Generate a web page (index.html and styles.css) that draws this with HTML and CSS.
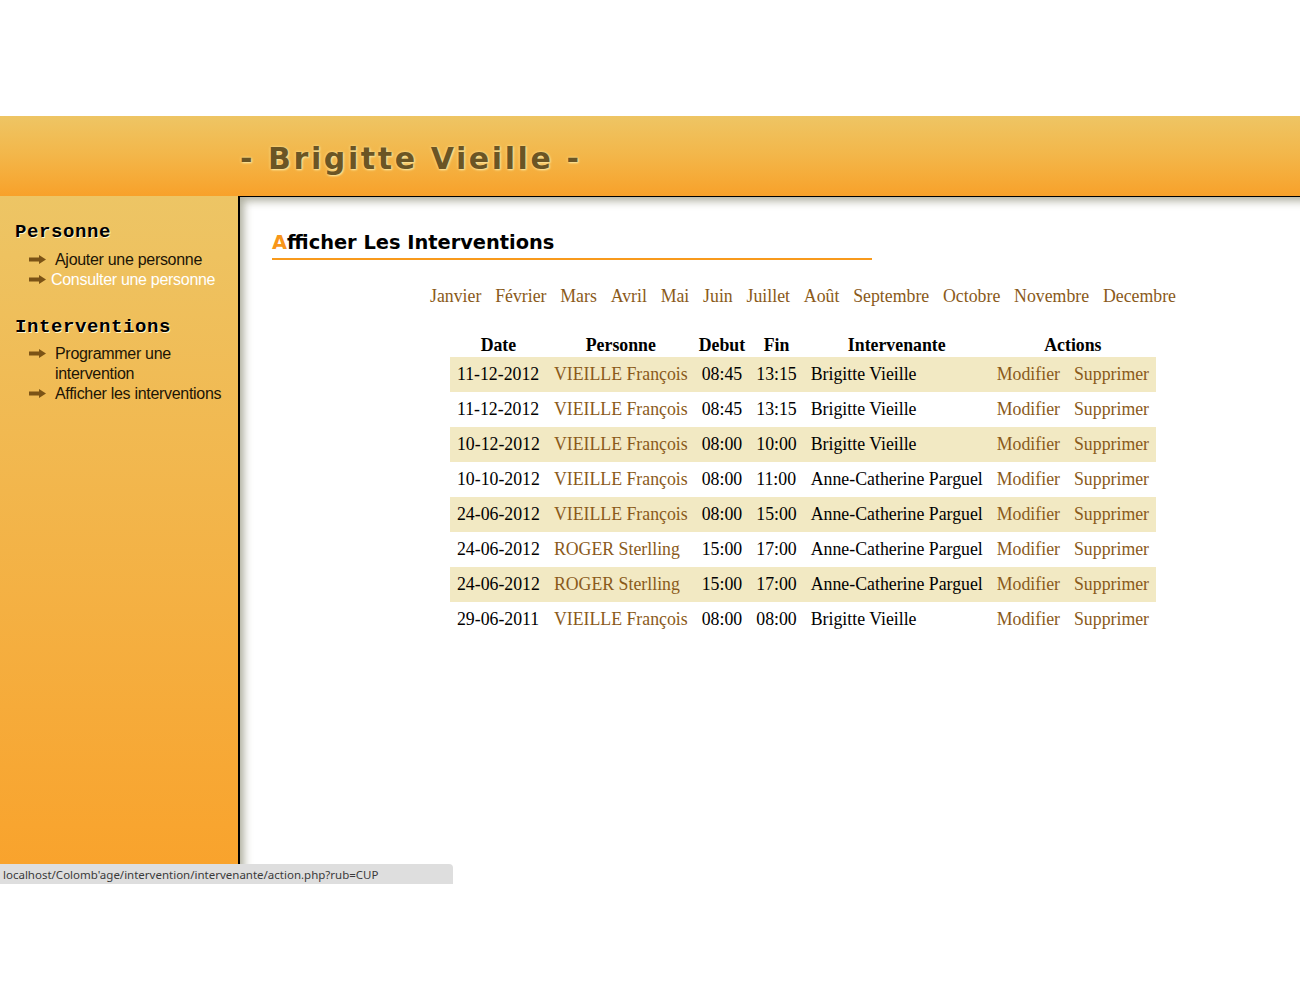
FILE: index.html
```html
<!DOCTYPE html>
<html lang="fr">
<head>
<meta charset="utf-8">
<title>Brigitte Vieille</title>
<link rel="stylesheet" href="styles.css">
</head>
<body>
<div class="page">
  <header class="banner">
    <h1 class="banner-title">- Brigitte Vieille -</h1>
  </header>
  <div class="body-wrap">
    <nav class="sidebar">
      <h2 class="side-heading">Personne</h2>
      <ul class="side-list">
        <li class="side-item"><svg class="arrow" viewBox="0 0 17 9" width="17" height="9"><path d="M0 2.5h10V0l7 4.5-7 4.5V6.5H0z" fill="#7b5316"/></svg><a class="side-link" href="#">Ajouter une personne</a></li>
        <li class="side-item side-item--tight"><svg class="arrow" viewBox="0 0 17 9" width="17" height="9"><path d="M0 2.5h10V0l7 4.5-7 4.5V6.5H0z" fill="#7b5316"/></svg><a class="side-link side-link--active" href="#">Consulter une personne</a></li>
      </ul>
      <h2 class="side-heading side-heading--second">Interventions</h2>
      <ul class="side-list side-list--second">
        <li class="side-item"><svg class="arrow" viewBox="0 0 17 9" width="17" height="9"><path d="M0 2.5h10V0l7 4.5-7 4.5V6.5H0z" fill="#7b5316"/></svg><a class="side-link" href="#">Programmer une<br>intervention</a></li>
        <li class="side-item"><svg class="arrow" viewBox="0 0 17 9" width="17" height="9"><path d="M0 2.5h10V0l7 4.5-7 4.5V6.5H0z" fill="#7b5316"/></svg><a class="side-link" href="#">Afficher les interventions</a></li>
      </ul>
    </nav>
    <main class="content">
      <h2 class="page-title"><span class="initial">A</span>fficher Les Interventions</h2>
      <div class="center-zone">
        <div class="months">
          <a href="#">Janvier</a><a href="#">Février</a><a href="#">Mars</a><a href="#">Avril</a><a href="#">Mai</a><a href="#">Juin</a><a href="#">Juillet</a><a href="#">Août</a><a href="#">Septembre</a><a href="#">Octobre</a><a href="#">Novembre</a><a href="#">Decembre</a>
        </div>
        <table class="grid">
          <thead>
            <tr><th>Date</th><th>Personne</th><th>Debut</th><th>Fin</th><th>Intervenante</th><th colspan="2">Actions</th></tr>
          </thead>
          <tbody>
            <tr class="alt"><td>11-12-2012</td><td><a href="#">VIEILLE François</a></td><td>08:45</td><td>13:15</td><td>Brigitte Vieille</td><td><a href="#">Modifier</a></td><td><a href="#">Supprimer</a></td></tr>
            <tr><td>11-12-2012</td><td><a href="#">VIEILLE François</a></td><td>08:45</td><td>13:15</td><td>Brigitte Vieille</td><td><a href="#">Modifier</a></td><td><a href="#">Supprimer</a></td></tr>
            <tr class="alt"><td>10-12-2012</td><td><a href="#">VIEILLE François</a></td><td>08:00</td><td>10:00</td><td>Brigitte Vieille</td><td><a href="#">Modifier</a></td><td><a href="#">Supprimer</a></td></tr>
            <tr><td>10-10-2012</td><td><a href="#">VIEILLE François</a></td><td>08:00</td><td>11:00</td><td>Anne-Catherine Parguel</td><td><a href="#">Modifier</a></td><td><a href="#">Supprimer</a></td></tr>
            <tr class="alt"><td>24-06-2012</td><td><a href="#">VIEILLE François</a></td><td>08:00</td><td>15:00</td><td>Anne-Catherine Parguel</td><td><a href="#">Modifier</a></td><td><a href="#">Supprimer</a></td></tr>
            <tr><td>24-06-2012</td><td><a href="#">ROGER Sterlling</a></td><td>15:00</td><td>17:00</td><td>Anne-Catherine Parguel</td><td><a href="#">Modifier</a></td><td><a href="#">Supprimer</a></td></tr>
            <tr class="alt"><td>24-06-2012</td><td><a href="#">ROGER Sterlling</a></td><td>15:00</td><td>17:00</td><td>Anne-Catherine Parguel</td><td><a href="#">Modifier</a></td><td><a href="#">Supprimer</a></td></tr>
            <tr><td>29-06-2011</td><td><a href="#">VIEILLE François</a></td><td>08:00</td><td>08:00</td><td>Brigitte Vieille</td><td><a href="#">Modifier</a></td><td><a href="#">Supprimer</a></td></tr>
          </tbody>
        </table>
      </div>
    </main>
  </div>
  <div class="statusbar">localhost/Colomb'age/intervention/intervenante/action.php?rub=CUP</div>
</div>
</body>
</html>
```
FILE: styles.css
```css
html, body {
  margin: 0;
  padding: 0;
  background: #fff;
}

.page {
  position: relative;
  padding-top: 116px;
  height: 768px;
  display: flex;
  flex-direction: column;
}

.banner {
  height: 80px;
  background: linear-gradient(to bottom, #eec564 0%, #f3b649 50%, #f8a12a 100%);
  display: flex;
  align-items: center;
  padding-left: 240px;
  flex: none;
}

.banner-title {
  margin: 0;
  font-family: "DejaVu Sans", sans-serif;
  font-weight: bold;
  font-size: 30px;
  letter-spacing: 2.6px;
  color: #6b5524;
  text-shadow: 0 0 3px #fbe59a, 1px 1px 2px #fbe59a;
  line-height: 1;
  padding-top: 6px;
}

.body-wrap {
  flex: 1;
  display: flex;
}

.sidebar {
  flex: none;
  width: 240px;
  box-sizing: border-box;
  background: linear-gradient(to bottom, #edc565 0%, #f9a22b 100%);
  border-right: 2px solid #000;
  padding-top: 25px;
}

.side-heading {
  margin: 0;
  padding-left: 15px;
  font-family: "Liberation Mono", "Courier New", monospace;
  font-weight: bold;
  font-size: 19px;
  letter-spacing: 0.6px;
  line-height: 22px;
  color: #000;
  text-shadow: 1px 1px 0 #fff6d0;
}

.side-heading--second {
  margin-top: 26px;
}

.side-list {
  list-style: none;
  margin: 7px 0 0 0;
  padding: 0 0 0 29px;
}

.side-list--second {
  margin-top: 6px;
}

.side-item {
  display: flex;
  align-items: flex-start;
  font-family: "Liberation Sans", Arial, sans-serif;
  font-size: 16px;
  line-height: 20px;
  letter-spacing: -0.3px;
}

.arrow {
  flex: none;
  margin-top: 5px;
  margin-right: 9px;
}

.side-item--tight .arrow {
  margin-right: 5px;
}

.side-link {
  color: #1c1406;
  text-decoration: none;
}

.side-link--active {
  color: #fff;
}

.content {
  flex: 1;
  border-top: 1px solid #000;
  background: #fff;
  box-shadow: inset 7px 7px 9px -3px rgba(110, 110, 80, 0.55);
  padding: 34px 0 0 32px;
}

.page-title {
  margin: 0;
  width: 600px;
  font-family: "DejaVu Sans", Verdana, sans-serif;
  font-weight: bold;
  font-size: 19.4px;
  line-height: 23px;
  color: #000;
  padding-bottom: 4px;
  border-bottom: 2px solid #f89a1c;
}

.initial {
  color: #f8961a;
}

.center-zone {
  margin-left: 34px;
  display: flex;
  flex-direction: column;
  align-items: center;
}

.months {
  margin-top: 26px;
  display: flex;
  gap: 13.8px;
  font-family: "Liberation Serif", "Times New Roman", serif;
  font-size: 17.8px;
  line-height: 21px;
}

.months a {
  color: #8a5a1a;
  text-decoration: none;
}

.grid {
  margin-top: 26px;
  border-collapse: collapse;
  border-spacing: 0;
  font-family: "Liberation Serif", "Times New Roman", serif;
  font-size: 17.8px;
  color: #000;
}

.grid th {
  height: 24px;
  padding: 0 3px;
  font-weight: bold;
  text-align: center;
  vertical-align: middle;
}

.grid td {
  height: 35px;
  padding: 0 7px;
  white-space: nowrap;
  text-align: left;
  vertical-align: middle;
}

.grid tr.alt td {
  background: #f2e9c3;
}

.grid a {
  color: #8a5a1a;
  text-decoration: none;
}

.statusbar {
  position: absolute;
  left: 0;
  top: 864px;
  width: 453px;
  height: 20px;
  box-sizing: border-box;
  background: #dedede;
  border-top-right-radius: 4px;
  padding-left: 3px;
  font-family: "Noto Sans", "Open Sans", sans-serif;
  font-size: 11.5px;
  line-height: 21px;
  color: #3a3a3a;
  white-space: nowrap;
}
```
